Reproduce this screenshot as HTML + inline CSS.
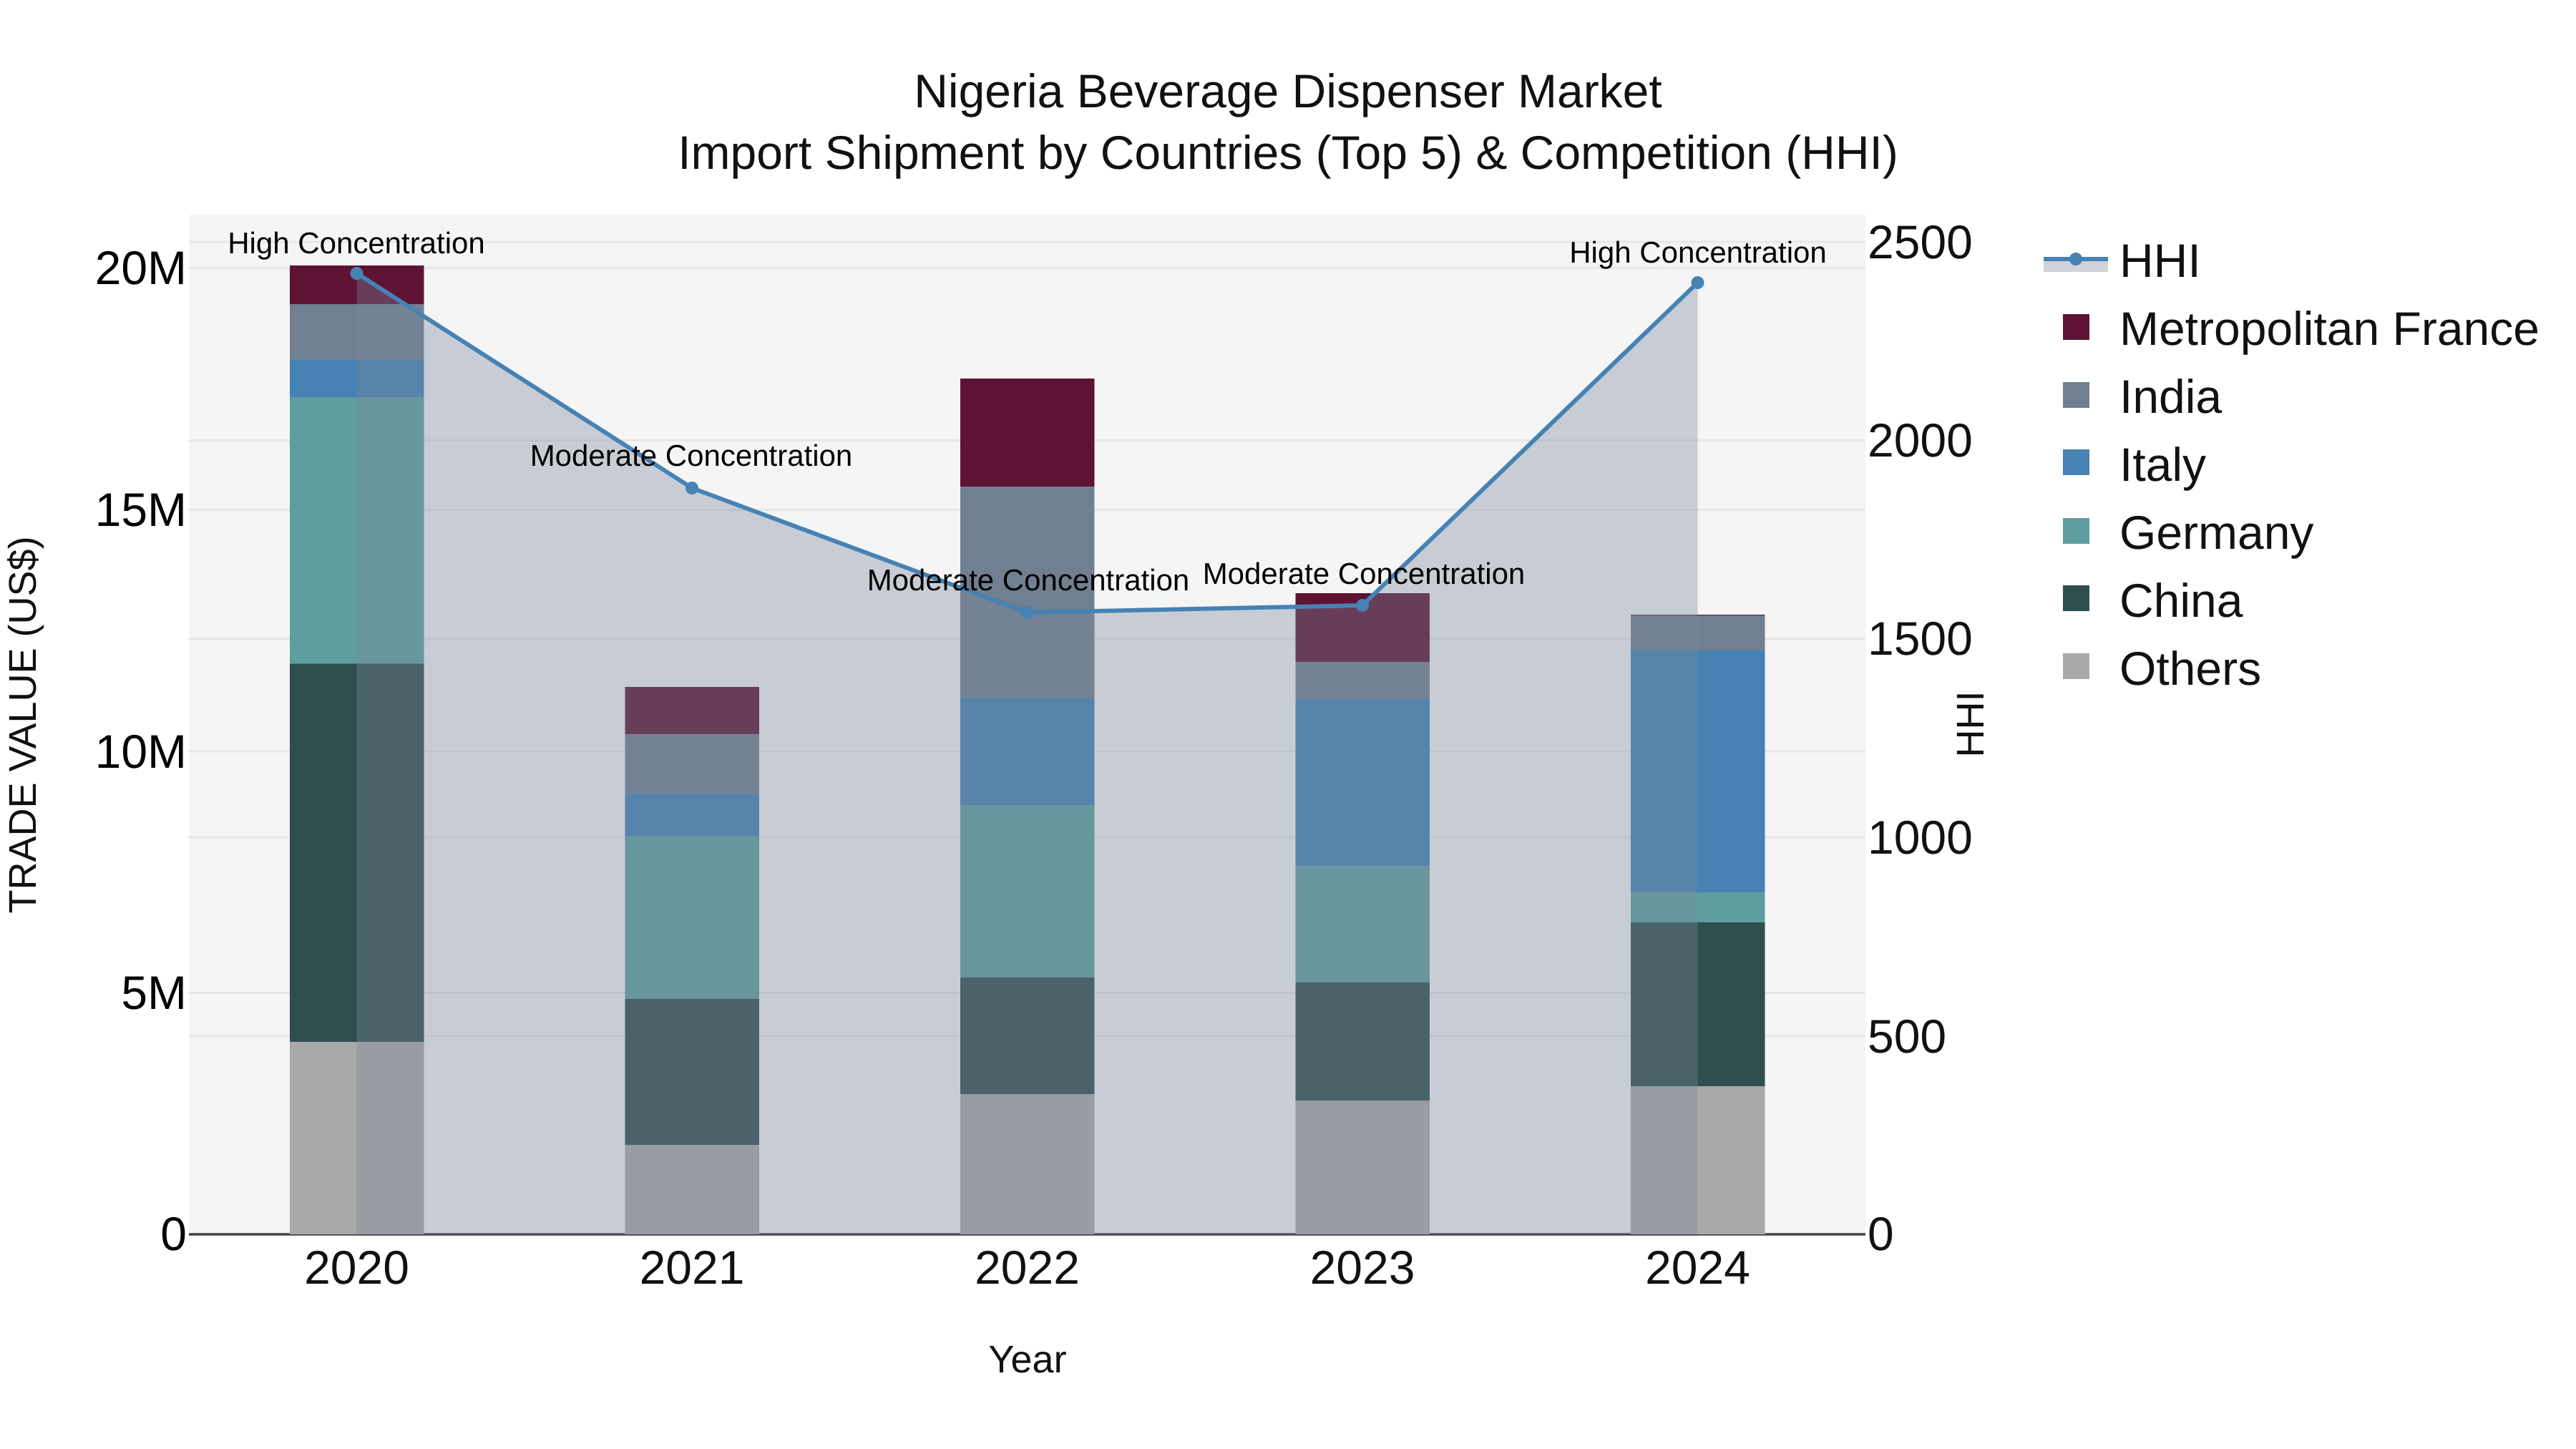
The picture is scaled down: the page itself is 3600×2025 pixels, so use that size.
<!DOCTYPE html>
<html><head><meta charset="utf-8"><title>Nigeria Beverage Dispenser Market</title>
<style>
html,body{margin:0;padding:0;background:#fff;width:3600px;height:2025px;overflow:hidden}
svg{display:block}
text{font-family:"Liberation Sans",sans-serif;text-rendering:geometricPrecision}
</style></head><body>
<svg xmlns="http://www.w3.org/2000/svg" width="3600" height="2025" viewBox="0 0 3600 2025">
<rect width="3600" height="2025" fill="#fff"/>
<rect x="264" y="300" width="2343" height="1425" fill="#f5f5f5"/>
<g stroke="#e7e7e7" stroke-width="3" fill="none">
<path d="M264 338H2607M264 374.5H2607M264 615.5H2607M264 712.5H2607M264 893H2607M264 1050H2607M264 1170H2607M264 1387.5H2607M264 1448H2607"/>
</g>
<path d="M264 1725H2607" stroke="#444" stroke-width="3.5"/>
<!-- 2020 -->
<g shape-rendering="crispEdges">
<rect x="405" y="371" width="187.5" height="54" fill="#5f1334"/>
<rect x="405" y="425" width="187.5" height="78" fill="#708090"/>
<rect x="405" y="503" width="187.5" height="52" fill="#4682b4"/>
<rect x="405" y="555" width="187.5" height="372.5" fill="#5f9ea0"/>
<rect x="405" y="927.5" width="187.5" height="528.5" fill="#2f4f4f"/>
<rect x="405" y="1456" width="187.5" height="269" fill="#a9a9a9"/>
<!-- 2021 -->
<rect x="873.5" y="960" width="187.5" height="66" fill="#5f1334"/>
<rect x="873.5" y="1026" width="187.5" height="83" fill="#708090"/>
<rect x="873.5" y="1109" width="187.5" height="59" fill="#4682b4"/>
<rect x="873.5" y="1168" width="187.5" height="228" fill="#5f9ea0"/>
<rect x="873.5" y="1396" width="187.5" height="204" fill="#2f4f4f"/>
<rect x="873.5" y="1600" width="187.5" height="125" fill="#a9a9a9"/>
<!-- 2022 -->
<rect x="1342" y="529" width="187.5" height="151" fill="#5f1334"/>
<rect x="1342" y="680" width="187.5" height="296" fill="#708090"/>
<rect x="1342" y="976" width="187.5" height="149" fill="#4682b4"/>
<rect x="1342" y="1125" width="187.5" height="241" fill="#5f9ea0"/>
<rect x="1342" y="1366" width="187.5" height="163" fill="#2f4f4f"/>
<rect x="1342" y="1529" width="187.5" height="196" fill="#a9a9a9"/>
<!-- 2023 -->
<rect x="1810.5" y="829" width="187.5" height="96" fill="#5f1334"/>
<rect x="1810.5" y="925" width="187.5" height="52" fill="#708090"/>
<rect x="1810.5" y="977" width="187.5" height="233" fill="#4682b4"/>
<rect x="1810.5" y="1210" width="187.5" height="163" fill="#5f9ea0"/>
<rect x="1810.5" y="1373" width="187.5" height="165" fill="#2f4f4f"/>
<rect x="1810.5" y="1538" width="187.5" height="187" fill="#a9a9a9"/>
<!-- 2024 -->
<rect x="2279" y="859" width="187.5" height="1" fill="#5f1334"/>
<rect x="2279" y="860" width="187.5" height="49" fill="#708090"/>
<rect x="2279" y="909" width="187.5" height="338" fill="#4682b4"/>
<rect x="2279" y="1247" width="187.5" height="42" fill="#5f9ea0"/>
<rect x="2279" y="1289" width="187.5" height="229" fill="#2f4f4f"/>
<rect x="2279" y="1518" width="187.5" height="207" fill="#a9a9a9"/>
</g>
<!-- HHI area and line -->
<path d="M498.5 382L967 682L1435.5 856L1904 846L2372.5 395V1725H498.5Z" fill="rgb(122,136,158)" fill-opacity="0.36"/>
<path d="M498.5 382L967 682L1435.5 856L1904 846L2372.5 395" fill="none" stroke="#4682b4" stroke-width="6" stroke-linejoin="round"/>
<g fill="#4682b4">
<circle cx="498.5" cy="382" r="9"/><circle cx="967" cy="682" r="9"/><circle cx="1435.5" cy="856" r="9"/><circle cx="1904" cy="846" r="9"/><circle cx="2372.5" cy="395" r="9"/>
</g>
<!-- annotations -->
<g font-size="42" fill="#000" text-anchor="middle">
<text x="498" y="354">High Concentration</text>
<text x="966" y="651">Moderate Concentration</text>
<text x="1437" y="825">Moderate Concentration</text>
<text x="1906" y="816">Moderate Concentration</text>
<text x="2373" y="367">High Concentration</text>
</g>
<!-- title -->
<g font-size="66" fill="#111" text-anchor="middle">
<text x="1800" y="150">Nigeria Beverage Dispenser Market</text>
<text x="1800" y="236">Import Shipment by Countries (Top 5) &amp; Competition (HHI)</text>
</g>
<!-- left ticks -->
<g font-size="66" fill="#000" text-anchor="end">
<text x="261" y="397">20M</text>
<text x="261" y="735">15M</text>
<text x="261" y="1073">10M</text>
<text x="261" y="1410">5M</text>
<text x="261" y="1747">0</text>
</g>
<!-- right ticks -->
<g font-size="66" fill="#111">
<text x="2610" y="361">2500</text>
<text x="2610" y="638">2000</text>
<text x="2610" y="915">1500</text>
<text x="2610" y="1193">1000</text>
<text x="2610" y="1471">500</text>
<text x="2610" y="1747">0</text>
</g>
<!-- x ticks -->
<g font-size="66" fill="#111" text-anchor="middle">
<text x="498.5" y="1794">2020</text>
<text x="967" y="1794">2021</text>
<text x="1435.5" y="1794">2022</text>
<text x="1904" y="1794">2023</text>
<text x="2372.5" y="1794">2024</text>
</g>
<!-- axis titles -->
<g font-size="54" fill="#111" text-anchor="middle">
<text x="1436" y="1918">Year</text>
<text transform="translate(50 1013) rotate(-90)">TRADE VALUE (US$)</text>
<text transform="translate(2772 1012) rotate(-90)">HHI</text>
</g>
<!-- legend -->
<rect x="2856" y="362" width="90" height="18" fill="#ced3da"/>
<path d="M2856 362H2946" stroke="#4682b4" stroke-width="6"/>
<circle cx="2901" cy="362" r="9" fill="#4682b4"/>
<g shape-rendering="crispEdges">
<rect x="2883" y="439" width="37" height="36" fill="#5f1334"/>
<rect x="2883" y="534" width="37" height="36" fill="#708090"/>
<rect x="2883" y="628" width="37" height="36" fill="#4682b4"/>
<rect x="2883" y="724" width="37" height="36" fill="#5f9ea0"/>
<rect x="2883" y="818" width="37" height="36" fill="#2f4f4f"/>
<rect x="2883" y="913" width="37" height="36" fill="#a9a9a9"/>
</g>
<g font-size="66" fill="#111">
<text x="2962" y="387">HHI</text>
<text x="2962" y="482">Metropolitan France</text>
<text x="2962" y="577">India</text>
<text x="2962" y="672">Italy</text>
<text x="2962" y="767">Germany</text>
<text x="2962" y="862">China</text>
<text x="2962" y="957">Others</text>
</g>
</svg>
</body></html>
